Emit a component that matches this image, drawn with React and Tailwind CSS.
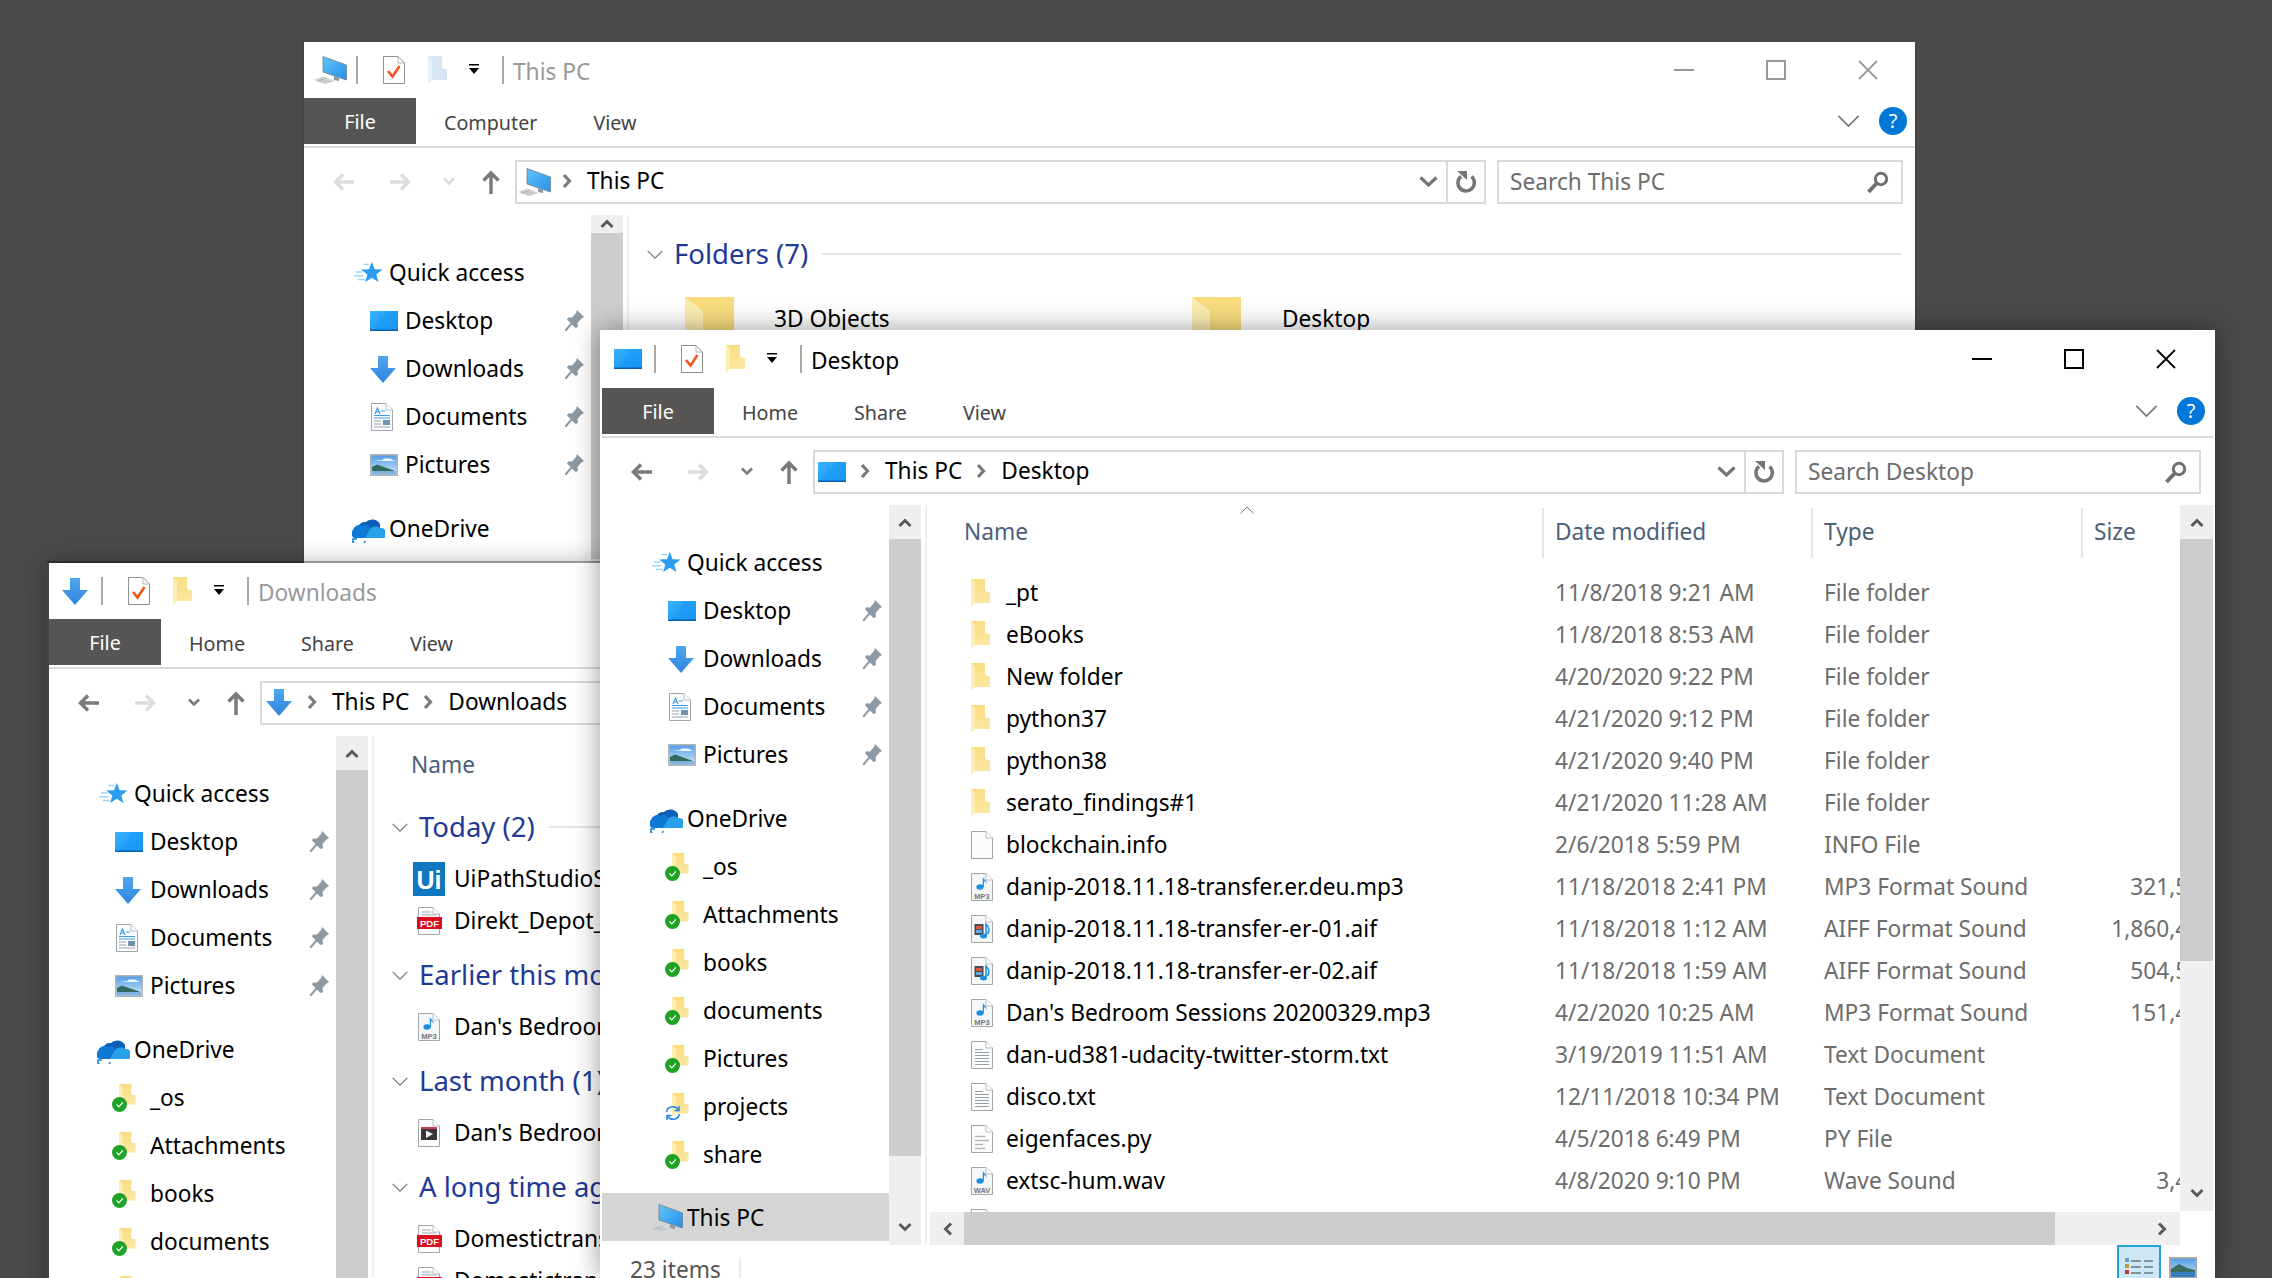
const Defs = () => (
  <svg className="absolute w-0 h-0">
    <defs>
      <linearGradient id="fold" x1="0" y1="0" x2="0.4" y2="1">
        <stop offset="0" stopColor="#f9dc7c" />
        <stop offset="1" stopColor="#fbe6a2" />
      </linearGradient>
      <linearGradient id="desk" x1="0" y1="0" x2="1" y2="1">
        <stop offset="0" stopColor="#3ab4ff" />
        <stop offset="1" stopColor="#0f8df0" />
      </linearGradient>
      <linearGradient id="scr" x1="0" y1="0" x2="1" y2="1">
        <stop offset="0" stopColor="#63c5fb" />
        <stop offset="1" stopColor="#2391e8" />
      </linearGradient>
      <linearGradient id="sky" x1="0" y1="0" x2="0" y2="1">
        <stop offset="0" stopColor="#4d9ce8" />
        <stop offset="1" stopColor="#d5ebf9" />
      </linearGradient>
      <linearGradient id="down" x1="0" y1="0" x2="0" y2="1">
        <stop offset="0" stopColor="#4fa6ef" />
        <stop offset="1" stopColor="#2f86de" />
      </linearGradient>
    </defs>
  </svg>
);

const FolderIcon = ({ pale, className = "w-[20px] h-[28px]" }) => (
  <svg viewBox="0 0 20 28" className={className}>
    <path d="M1 0H15V12L20 13.5V24H5L1 27Z" fill={pale ? "#d7e4f2" : "url(#fold)"} />
    <path d="M1 0L5 3.5V24L1 28Z" fill={pale ? "#e6eef7" : "#fdeeb4"} />
  </svg>
);

const BigFolder = () => (
  <svg viewBox="0 0 49 44" className="w-[49px] h-[44px]">
    <rect width="49" height="44" fill="#f8dc7e" />
    <path d="M0 0L18 14V44H0Z" fill="#fcedb2" />
  </svg>
);

const DesktopIcon = () => (
  <svg viewBox="0 0 28 20" className="w-[28px] h-[20px]">
    <rect width="28" height="20" fill="url(#desk)" />
    <path d="M4 18L17 0H28V18Z" fill="#1c9af6" opacity="0.55" />
    <rect y="18.500" width="28" height="1.500" fill="#0a5fb0" />
  </svg>
);

const PcIcon = () => (
  <svg viewBox="0 0 33 28" className="w-[33px] h-[28px] shrink-0">
    <path d="M9 .5L32.500 9V24L9 16Z" fill="url(#scr)" stroke="#6f7f8b" strokeWidth="0.800" />
    <path d="M20 20L25 22V25L20 24Z" fill="#8f989f" />
    <path d="M0 24L9 20.500L21 25L11 28Z" fill="#cfd3d6" />
    <path d="M4 24L13 27M7 23L16 26M3 25.500L13 22" stroke="#a4a9ad" strokeWidth="0.800" strokeDasharray="1.500 1" />
  </svg>
);

const StarIcon = () => (
  <svg viewBox="0 0 32 24" className="ml-[2px] w-[30px] h-[24px]">
    <path d="M19 0L21.900 8L30.400 8.300L23.800 13.500L26 21.700L19 17L12 21.700L14.200 13.500L7.600 8.300L16.100 8Z" fill="#2b9cf2" />
    <path d="M10 3H16M2 11H9M0 15H10M4 19H12" stroke="#9fd3f9" strokeWidth="1.500" />
  </svg>
);

const ArrowDownIcon = () => (
  <svg viewBox="0 0 26 27" className="w-[26px] h-[27px]">
    <path d="M8 0H18V12H26L13 27L0 12H8Z" fill="url(#down)" />
  </svg>
);

const DocShell = ({ children, fill = "#fbfcfd" }) => (
  <svg viewBox="0 0 24 28" className="w-[24px] h-[28px] overflow-visible">
    <path d="M1.500.5H16L22.500 7V27.500H1.500Z" fill={fill} stroke="#a3a6a8" />
    <path d="M16 .5V7H22.500" fill="#fff" stroke="#b9bcbe" />
    {children}
  </svg>
);

const DocumentsIcon = () => (
  <DocShell>
    <path d="M5 11L7.500 5L10 11M6 9H9M11 8H15" fill="none" stroke="#3f9be6" strokeWidth="1.200" />
    <path d="M4 12.500H20M4 15H20" stroke="#3f9be6" />
    <path d="M4 18H11M4 21H11M4 24H20" stroke="#9aa3aa" />
    <rect x="13" y="17" width="7" height="5" fill="#6f93a8" />
  </DocShell>
);

const PicturesIcon = () => (
  <svg viewBox="0 0 28 22" className="w-[28px] h-[22px]">
    <rect x="0.750" y="0.750" width="26.500" height="20.500" fill="url(#sky)" stroke="#b0b3b5" strokeWidth="1.500" />
    <path d="M4 6H12L14 4.500H20L25 7H14Z" fill="#eef7fd" />
    <path d="M2 13L7 10.500L14 13L24 16.500V17H2Z" fill="#2f6a5e" />
    <rect x="2" y="17" width="24" height="3.500" fill="#7fb2de" />
  </svg>
);

const OneDriveIcon = () => (
  <svg viewBox="0 0 33 27" className="w-[33px] h-[27px]">
    <path d="M6 14a7 7 0 0 1 8-8a9 9 0 0 1 14 2v6Z" fill="#0a5fb8" />
    <path d="M2 22a5 5 0 0 1-1-8a6 6 0 0 1 9-4a6 6 0 0 1 9 3v9Z" fill="#0e78d5" />
    <path d="M13 22l4-7a7 7 0 0 1 11-3a5.500 5.500 0 0 1 4 10Z" fill="#28a0ea" />
    <path d="M1 23a6 6 0 0 0 12 2M1 27v-4h4" fill="none" stroke="#1683dc" strokeWidth="1.500" />
  </svg>
);

const CheckBadge = () => (
  <svg viewBox="0 0 15 15" className="absolute left-0 bottom-0 w-[15px] h-[15px]">
    <circle cx="7.500" cy="7.500" r="7.500" fill="#1fa326" />
    <path d="M4.500 7.500L6.800 9.800L10.800 5.500" fill="none" stroke="#fff" strokeWidth="1.200" />
  </svg>
);

const SyncBadge = () => (
  <svg viewBox="0 0 16 16" className="absolute left-0 bottom-0 w-[16px] h-[16px]">
    <path d="M1.500 7a6.500 6.500 0 0 1 12-2M14.500 9a6.500 6.500 0 0 1-12 2" fill="none" stroke="#1f87e0" strokeWidth="1.500" />
    <path d="M14 1v4.500H9.500M2 15v-4.500H6.500" fill="none" stroke="#1f87e0" strokeWidth="1.500" />
  </svg>
);

const SyncedFolder = ({ sync }) => (
  <div className="relative w-[26px] h-[28px] -ml-[3px]">
    <div className="absolute left-[6px] top-0">
      <FolderIcon className="w-[18px] h-[24px]" />
    </div>
    {sync ? <SyncBadge /> : <CheckBadge />}
  </div>
);

const Note = ({ y = 0 }) => (
  <g transform={`translate(0 ${y})`}>
    <ellipse cx="10" cy="16" rx="3.600" ry="2.800" fill="#1b8fe4" />
    <path d="M12.800 16V6C14 9 17 9 16.500 13C16 10.500 14.500 10.500 14 10V16Z" fill="#1b8fe4" />
  </g>
);

const AudioIcon = ({ label }) => (
  <DocShell fill="#f4f6f8">
    <Note y={-2} />
    <text x="12" y="25.500" textAnchor="middle" className="font-['Liberation_Sans',sans-serif] font-bold text-[7.500px]" fill="#777">
      {label}
    </text>
  </DocShell>
);

const AifIcon = () => (
  <DocShell fill="#f4f6f8">
    <rect x="4.500" y="9" width="9" height="11" fill="#454b55" />
    <rect x="6" y="11" width="6" height="3" fill="#d8593c" />
    <rect x="6" y="15" width="6" height="3" fill="#6aa6dc" />
    <ellipse cx="13.500" cy="21" rx="3.500" ry="2.500" fill="#1b8fe4" />
    <path d="M16 21V9C19 12 20 15 17.500 19" fill="none" stroke="#1b8fe4" strokeWidth="1.500" />
  </DocShell>
);

const Lines = () => (
  <DocShell>
    <path d="M5 8.500H13M5 11.500H19M5 14.500H19M5 17.500H19M5 20.500H19M5 23.500H19" stroke="#9a9da0" />
  </DocShell>
);

const PyIcon = () => (
  <DocShell>
    <path d="M5 11.500H15M5 15.500H19M5 19.500H13M5 23.500H15" stroke="#b4b6b8" strokeWidth="1.400" />
  </DocShell>
);

const PdfIcon = () => (
  <DocShell>
    <path d="M5 5H14M5 8H19" stroke="#a8aaac" />
    <rect x="0" y="10" width="25" height="12" fill="#dc0d1e" />
    <text x="12.500" y="19.500" textAnchor="middle" className="font-['Liberation_Sans',sans-serif] font-bold text-[9.500px]" fill="#fff">
      PDF
    </text>
  </DocShell>
);

const VideoIcon = () => (
  <DocShell>
    <rect x="4" y="8" width="16" height="13" fill="#3a3538" />
    <path d="M4 8H20V10H4Z" fill="#c2434e" />
    <path d="M9 11.500L16 15L9 19Z" fill="#f1f1f1" />
  </DocShell>
);

const UiPathIcon = () => (
  <div className="-ml-[4px] w-[32px] h-[34px] bg-[#0f76c0] text-white font-['Liberation_Sans',sans-serif] font-bold text-[25px] leading-[36px] text-center">
    Ui
  </div>
);

const CheckDoc = () => (
  <svg viewBox="0 0 22 28" className="w-[22px] h-[28px]">
    <path d="M.5.5H15L21.500 7V27.500H.5Z" fill="#fff" stroke="#8f8f8f" />
    <path d="M15 .5V7H21.500" fill="none" stroke="#b5b5b5" />
    <path d="M5 15L9.500 20.500L16.500 10" fill="none" stroke="#f0561d" strokeWidth="2.600" />
  </svg>
);

const Pin = () => (
  <svg viewBox="0 0 20 22" className="w-[20px] h-[22px]">
    <path d="M13 0L20 7L17.500 8.500L13.500 13L14 17L11.500 18L8 14.500L2 21.500L.5 20L6.500 13L3 9.500L4 7.500L8 7.500L12 3Z" fill="#8d9aa3" />
  </svg>
);

const Caret = ({ dir }) => {
  const paths = {
    up: "M1.500 9L7 3.500L12.500 9",
    down: "M1.500 2L7 7.500L12.500 2",
  };
  return (
    <svg viewBox="0 0 14 11" className="w-[14px] h-[11px]">
      <path d={paths[dir]} fill="none" stroke="#5a5a5a" strokeWidth="3" />
    </svg>
  );
};

const HCaret = ({ dir }) => (
  <svg viewBox="0 0 11 14" className="w-[11px] h-[14px]">
    <path d={dir === "left" ? "M9 1.500L3.500 7L9 12.500" : "M2 1.500L7.500 7L2 12.500"} fill="none" stroke="#5a5a5a" strokeWidth="3" />
  </svg>
);

const Crumb = () => (
  <svg viewBox="0 0 10 16" className="w-[10px] h-[16px] shrink-0">
    <path d="M2 2L7.500 8L2 14" fill="none" stroke="#7a7a7a" strokeWidth="3.200" />
  </svg>
);

const ThinChevron = ({ className, color = "#777" }) => (
  <svg viewBox="0 0 24 13" className={className}>
    <path d="M1 1L12 12L23 1" fill="none" stroke={color} strokeWidth="1.800" />
  </svg>
);

const NavArrow = ({ flip, color }) => (
  <svg viewBox="0 0 22 20" className={`w-[22px] h-[20px] ${flip ? "rotate-180" : ""}`}>
    <path d="M22 10H4M11 2.500L3.500 10L11 17.500" fill="none" stroke={color} strokeWidth="3.500" />
  </svg>
);

const TitleControls = ({ color }) => (
  <div className="ml-auto mr-[1px] flex">
    <div className="w-[92px] flex justify-center">
      <svg viewBox="0 0 20 20" className="w-[20px] h-[20px]">
        <path d="M0 10H20" stroke={color} strokeWidth="2" />
      </svg>
    </div>
    <div className="w-[92px] flex justify-center">
      <svg viewBox="0 0 20 20" className="w-[20px] h-[20px]">
        <rect x="1" y="1" width="18" height="18" fill="none" stroke={color} strokeWidth="2" />
      </svg>
    </div>
    <div className="w-[92px] flex justify-center">
      <svg viewBox="0 0 20 20" className="w-[20px] h-[20px]">
        <path d="M1 1L19 19M19 1L1 19" stroke={color} strokeWidth="1.800" />
      </svg>
    </div>
  </div>
);

const SIDE_TOP = [
  { label: "Desktop", icon: <DesktopIcon /> },
  { label: "Downloads", icon: <ArrowDownIcon /> },
  { label: "Documents", icon: <DocumentsIcon /> },
  { label: "Pictures", icon: <PicturesIcon /> },
];

const SIDE_DRIVE = [
  { label: "_os" },
  { label: "Attachments" },
  { label: "books" },
  { label: "documents" },
  { label: "Pictures" },
  { label: "projects", sync: true },
  { label: "share" },
];

const Sidebar = () => (
  <div className="w-[287px] h-full shrink-0 overflow-hidden pt-[34px] text-black">
    <div className="h-[48px] flex items-center pl-[48px]">
      <div className="w-[37px]">
        <StarIcon />
      </div>
      Quick access
    </div>
    {SIDE_TOP.map((item) => (
      <div key={item.label} className="h-[48px] flex items-center pl-[66px] pr-[7px]">
        <div className="w-[35px]">{item.icon}</div>
        {item.label}
        <div className="ml-auto">
          <Pin />
        </div>
      </div>
    ))}
    <div className="h-[48px] mt-[16px] flex items-center pl-[48px]">
      <div className="w-[37px]">
        <OneDriveIcon />
      </div>
      OneDrive
    </div>
    {SIDE_DRIVE.map((item) => (
      <div key={item.label} className="h-[48px] flex items-center pl-[66px]">
        <div className="w-[35px]">
          <SyncedFolder sync={item.sync} />
        </div>
        {item.label}
      </div>
    ))}
    <div className="h-[48px] mt-[14px] pt-[2px] flex items-center pl-[48px] bg-[#d5d5d5]">
      <div className="w-[37px]">
        <PcIcon />
      </div>
      This PC
    </div>
  </div>
);

const SideScroll = () => (
  <div className="w-[32px] h-full shrink-0 flex flex-col bg-[#efefef]">
    <div className="h-[34px] flex items-center justify-center">
      <Caret dir="up" />
    </div>
    <div className="h-[617px] bg-[#cdcdcd]" />
    <div className="flex-1 flex items-end justify-center pb-[12px]">
      <Caret dir="down" />
    </div>
  </div>
);

const Splitter = () => (
  <div className="w-[9px] h-full shrink-0 flex justify-center">
    <div className="w-[2px] h-full bg-[#f0f0f0]" />
  </div>
);

const ColumnHeader = () => (
  <div className="relative h-[55px] grid grid-cols-[612px_269px_270px_168px] w-[1319px] items-center text-[#4c607a]">
    <div className="pl-[34px]">Name</div>
    <div className="pl-[11px] h-[50px] flex items-center border-l-2 border-[#e5e5e5]">Date modified</div>
    <div className="pl-[11px] h-[50px] flex items-center border-l-2 border-[#e5e5e5]">Type</div>
    <div className="pl-[11px] h-[50px] flex items-center border-l-2 border-[#e5e5e5]">Size</div>
    <svg viewBox="0 0 14 8" className="absolute left-[310px] top-[1px] w-[14px] h-[8px]">
      <path d="M.5 7.500L7 1L13.500 7.500" fill="none" stroke="#7d7d7d" />
    </svg>
  </div>
);

const FILES = [
  ["_pt", "11/8/2018 9:21 AM", "File folder", "", <FolderIcon />],
  ["eBooks", "11/8/2018 8:53 AM", "File folder", "", <FolderIcon />],
  ["New folder", "4/20/2020 9:22 PM", "File folder", "", <FolderIcon />],
  ["python37", "4/21/2020 9:12 PM", "File folder", "", <FolderIcon />],
  ["python38", "4/21/2020 9:40 PM", "File folder", "", <FolderIcon />],
  ["serato_findings#1", "4/21/2020 11:28 AM", "File folder", "", <FolderIcon />],
  ["blockchain.info", "2/6/2018 5:59 PM", "INFO File", "", <DocShell />],
  ["danip-2018.11.18-transfer.er.deu.mp3", "11/18/2018 2:41 PM", "MP3 Format Sound", "321,508 KB", <AudioIcon label="MP3" />],
  ["danip-2018.11.18-transfer-er-01.aif", "11/18/2018 1:12 AM", "AIFF Format Sound", "1,860,412 KB", <AifIcon />],
  ["danip-2018.11.18-transfer-er-02.aif", "11/18/2018 1:59 AM", "AIFF Format Sound", "504,512 KB", <AifIcon />],
  ["Dan's Bedroom Sessions 20200329.mp3", "4/2/2020 10:25 AM", "MP3 Format Sound", "151,412 KB", <AudioIcon label="MP3" />],
  ["dan-ud381-udacity-twitter-storm.txt", "3/19/2019 11:51 AM", "Text Document", "", <Lines />],
  ["disco.txt", "12/11/2018 10:34 PM", "Text Document", "", <Lines />],
  ["eigenfaces.py", "4/5/2018 6:49 PM", "PY File", "", <PyIcon />],
  ["extsc-hum.wav", "4/8/2020 9:10 PM", "Wave Sound", "3,412 KB", <AudioIcon label="WAV" />],
  ["", "", "", "", <Lines />],
];

const FileRow = ({ name, date, type, size, icon }) => (
  <div className="h-[42px] w-[1319px] grid grid-cols-[612px_269px_270px_168px] items-center whitespace-nowrap">
    <div className="pl-[40px] flex items-center text-black">
      <div className="w-[36px]">{icon}</div>
      {name}
    </div>
    <div className="pl-[13px] text-[#6d6d6d]">{date}</div>
    <div className="pl-[13px] text-[#6d6d6d]">{type}</div>
    <div className="text-right text-[#6d6d6d]">{size}</div>
  </div>
);

const DesktopContent = () => (
  <>
    <div className="w-[1250px] shrink-0 h-full flex flex-col">
      <div className="flex-1 overflow-hidden">
        <ColumnHeader />
        <div className="pt-[12px]">
          {FILES.map((f, i) => (
            <FileRow key={i} name={f[0]} date={f[1]} type={f[2]} size={f[3]} icon={f[4]} />
          ))}
        </div>
      </div>
      <div className="h-[33px] shrink-0 flex bg-[#efefef]">
        <div className="w-[34px] flex items-center justify-center">
          <HCaret dir="left" />
        </div>
        <div className="w-[1091px] bg-[#cdcdcd]" />
        <div className="flex-1 flex items-center justify-end pr-[12px]">
          <HCaret dir="right" />
        </div>
      </div>
    </div>
    <div className="w-[33px] h-[706px] shrink-0 flex flex-col bg-[#efefef]">
      <div className="h-[34px] flex items-center justify-center">
        <Caret dir="up" />
      </div>
      <div className="h-[422px] bg-[#cdcdcd]" />
      <div className="flex-1 flex items-end justify-center pb-[12px]">
        <Caret dir="down" />
      </div>
    </div>
  </>
);

const GroupTitle = ({ label }) => (
  <div className="h-[62px] mt-[2px] flex items-center whitespace-nowrap pl-[15px] text-[27.500px] text-[#1e3a94]">
    <ThinChevron className="w-[16px] h-[9px] mr-[11px] shrink-0" />
    {label}
    <div className="ml-[14px] flex-1 h-[2px] bg-[#e5e5e5]" />
  </div>
);

const DownloadRow = ({ icon, name }) => (
  <div className="h-[42px] pl-[40px] flex items-center whitespace-nowrap text-black">
    <div className="w-[37px]">{icon}</div>
    {name}
  </div>
);

const DownloadsContent = () => (
  <div className="flex-1 h-full overflow-hidden">
    <div className="h-[58px] pl-[34px] flex items-center text-[#4c607a]">Name</div>
    <GroupTitle label="Today (2)" />
    <DownloadRow icon={<UiPathIcon />} name="UiPathStudioSetup.exe" />
    <DownloadRow icon={<PdfIcon />} name="Direkt_Depot_Auszug.pdf" />
    <GroupTitle label="Earlier this month (1)" />
    <DownloadRow icon={<AudioIcon label="MP3" />} name="Dan's Bedroom Sessions.mp3" />
    <GroupTitle label="Last month (1)" />
    <DownloadRow icon={<VideoIcon />} name="Dan's Bedroom Sessions.mp4" />
    <GroupTitle label="A long time ago (12)" />
    <DownloadRow icon={<PdfIcon />} name="Domestictransfer.pdf" />
    <DownloadRow icon={<PdfIcon />} name="Domestictransfer2.pdf" />
  </div>
);

const ThisPcContent = () => (
  <div className="flex-1 h-full overflow-hidden pt-[15px] pr-[14px]">
    <div className="h-[48px] flex items-center pl-[15px] text-[27.500px] text-[#1e3a94]">
      <ThinChevron className="w-[16px] h-[9px] mr-[11px] shrink-0" />
      Folders (7)
      <div className="ml-[14px] flex-1 h-[2px] bg-[#e5e5e5]" />
    </div>
    <div className="mt-[19px] pl-[53px] grid grid-cols-[507px_507px] text-black">
      <div className="flex items-center">
        <div className="w-[89px]">
          <BigFolder />
        </div>
        3D Objects
      </div>
      <div className="flex items-center">
        <div className="w-[90px]">
          <BigFolder />
        </div>
        Desktop
      </div>
    </div>
  </div>
);

const AddressChevron = () => (
  <svg viewBox="0 0 19 11" className="ml-auto w-[19px] h-[11px]">
    <path d="M1.500 1.500L9.500 9L17.500 1.500" fill="none" stroke="#767676" strokeWidth="3.200" />
  </svg>
);

const ExplorerWindow = ({ className, active, covered, titleIcon, title, paleFolder, tabs, crumbs, search, backDisabled, children, itemCount }) => {
  const backColor = backDisabled ? "#dcdcdc" : "#7a7a7a";
  return (
    <div className={`absolute w-[1615px] flex flex-col bg-white border-x-2 font-['Noto_Sans',sans-serif] text-[22.700px] ${className}`}>
      <div className={`shrink-0 flex items-center pl-[12px] ${active ? "h-[58px]" : "h-[56px]"}`}>
        <div className="w-[28px] flex justify-center">{titleIcon}</div>
        <div className="ml-[12px] w-[2px] h-[28px] bg-[#a8a8a8]" />
        <div className="ml-[25px]">
          <CheckDoc />
        </div>
        <div className="ml-[22px]">
          <FolderIcon pale={paleFolder} />
        </div>
        <svg viewBox="0 0 10 12" className="ml-[22px] w-[10px] h-[12px]">
          <rect width="10" height="1.500" fill="#000" />
          <path d="M0 4H10L5 10Z" fill="#000" />
        </svg>
        <div className="ml-[23px] w-[2px] h-[28px] bg-[#a8a8a8]" />
        <div className={`ml-[9px] pt-[4px] ${active ? "text-black" : "text-[#999]"}`}>{title}</div>
        {!covered && <TitleControls color={active ? "#000" : "#999"} />}
      </div>
      <div className="h-[50px] shrink-0 flex items-start border-b-2 border-[#dadbdc] text-[#444] text-[19.700px]">
        <div className="w-[112px] h-[46px] pt-[2px] flex items-center justify-center bg-[#565553] text-white">File</div>
        {tabs.map((t) => (
          <div key={t} className="h-[50px] px-[28px] flex items-center">
            {t}
          </div>
        ))}
        {!covered && (
          <div className="ml-auto mr-[8px] h-[46px] flex items-center">
            <ThinChevron className="w-[23px] h-[12px] mr-[19px]" />
            <div className="w-[28px] h-[28px] rounded-full bg-[#0078d7] text-white text-[20px] flex items-center justify-center">?</div>
          </div>
        )}
      </div>
      <div className="h-[67px] shrink-0 flex items-center">
        <div className="w-[211px] relative h-full flex items-center shrink-0 pl-[28px]">
          <NavArrow color={backColor} />
          <div className="ml-[36px]">
            <NavArrow flip color="#dcdcdc" />
          </div>
          <svg viewBox="0 0 12 9" className="ml-[31px] w-[12px] h-[9px]">
            <path d="M1 1.500L6 6.500L11 1.500" fill="none" stroke={backDisabled ? "#dcdcdc" : "#7a7a7a"} strokeWidth="2.600" />
          </svg>
          <svg viewBox="0 0 20 24" className="ml-[26px] w-[20px] h-[24px]">
            <path d="M10 24V3M2.500 10.500L10 3L17.500 10.500" fill="none" stroke="#7a7a7a" strokeWidth="3.500" />
          </svg>
        </div>
        <div className="w-[971px] h-[44px] shrink-0 flex items-center border-2 border-[#d9d9d9] pl-[3px] text-black">
          <div className="w-[28px] flex justify-center">{titleIcon}</div>
          {crumbs.map((c) => (
            <div key={c} className="flex items-center">
              <div className="ml-[14px] mr-[15px]">
                <Crumb />
              </div>
              {c}
            </div>
          ))}
          <AddressChevron />
          <div className="ml-[8px] w-[2px] h-full bg-[#d9d9d9]" />
          <div className="w-[36px] flex justify-center">
            <svg viewBox="0 0 22 23" className="w-[22px] h-[23px]">
              <path d="M16.500 6.500A8.200 8.200 0 1 1 6 6.300" fill="none" stroke="#767676" strokeWidth="3.500" />
              <path d="M2 1H12V10Z" fill="#767676" />
            </svg>
          </div>
        </div>
        {!covered && (
          <div className="ml-[11px] w-[406px] h-[44px] shrink-0 flex items-center justify-between border-2 border-[#d9d9d9] pl-[11px] pr-[12px] pt-[1px] text-[#6d6d6d]">
            {search}
            <svg viewBox="0 0 23 23" className="w-[23px] h-[23px]">
              <circle cx="15" cy="8" r="5.700" fill="none" stroke="#707070" strokeWidth="3" />
              <path d="M11 12L2.500 21" stroke="#707070" strokeWidth="4" />
            </svg>
          </div>
        )}
      </div>
      <div className="flex-1 min-h-0 flex">
        <Sidebar />
        <SideScroll />
        <Splitter />
        {children}
      </div>
      {itemCount && (
        <div className="h-[33px] shrink-0 flex items-start text-[#555]">
          <div className="w-[139px] h-[33px] mt-[12px] pb-[6px] pl-[28px] flex items-center border-r-2 border-[#ececec] whitespace-nowrap">{itemCount}</div>
          <div className="ml-auto mr-[16px] flex items-start">
            <div className="w-[44px] h-[44px] flex items-start justify-center pt-[10px] bg-[#cce8f6] border-2 border-[#26a0da]">
              <svg viewBox="0 0 28 22" className="w-[28px] h-[22px]">
                <path d="M6 4H16M19 4H28M6 10H16M19 10H28M6 16H16M19 16H28" stroke="#6b7780" strokeWidth="1.400" />
                <rect x="0" y="1" width="4" height="4" fill="#6a9fc7" />
                <rect x="0" y="7" width="4" height="4" fill="#b59a3b" />
                <rect x="0" y="13" width="4" height="4" fill="#c0392b" />
              </svg>
            </div>
            <svg viewBox="0 0 28 22" className="ml-[8px] mt-[12px] w-[28px] h-[22px]">
              <rect x="1" y="1" width="26" height="20" fill="url(#sky)" stroke="#a5a8aa" strokeWidth="2" />
              <path d="M2 12L10 7L18 11L26 13V15H2Z" fill="#3d6b5f" />
              <rect x="2" y="15" width="24" height="5" fill="#3a7dc2" />
            </svg>
          </div>
        </div>
      )}
    </div>
  );
};

export default function App() {
  return (
    <div className="relative w-[2272px] h-[1278px] overflow-hidden bg-[#4b4a48]">
      <Defs />
      <ExplorerWindow
        className="left-[302px] top-[42px] h-[540px] border-[#454442]"
        titleIcon={<PcIcon />}
        title="This PC"
        paleFolder
        tabs={["Computer", "View"]}
        crumbs={["This PC"]}
        search="Search This PC"
        backDisabled
      >
        <ThisPcContent />
      </ExplorerWindow>
      <ExplorerWindow
        className="left-[47px] top-[563px] h-[948px] border-[#454442] shadow-[0_-2px_0_rgba(0,0,0,0.3),0_0_24px_rgba(0,0,0,0.3)]"
        covered
        titleIcon={<ArrowDownIcon />}
        title="Downloads"
        tabs={["Home", "Share", "View"]}
        crumbs={["This PC", "Downloads"]}
      >
        <DownloadsContent />
      </ExplorerWindow>
      <ExplorerWindow
        className="left-[600px] top-[330px] h-[948px] border-white shadow-[0_0_26px_rgba(0,0,0,0.4)]"
        active
        titleIcon={<DesktopIcon />}
        title="Desktop"
        tabs={["Home", "Share", "View"]}
        crumbs={["This PC", "Desktop"]}
        search="Search Desktop"
        itemCount="23 items"
      >
        <DesktopContent />
      </ExplorerWindow>
    </div>
  );
}
